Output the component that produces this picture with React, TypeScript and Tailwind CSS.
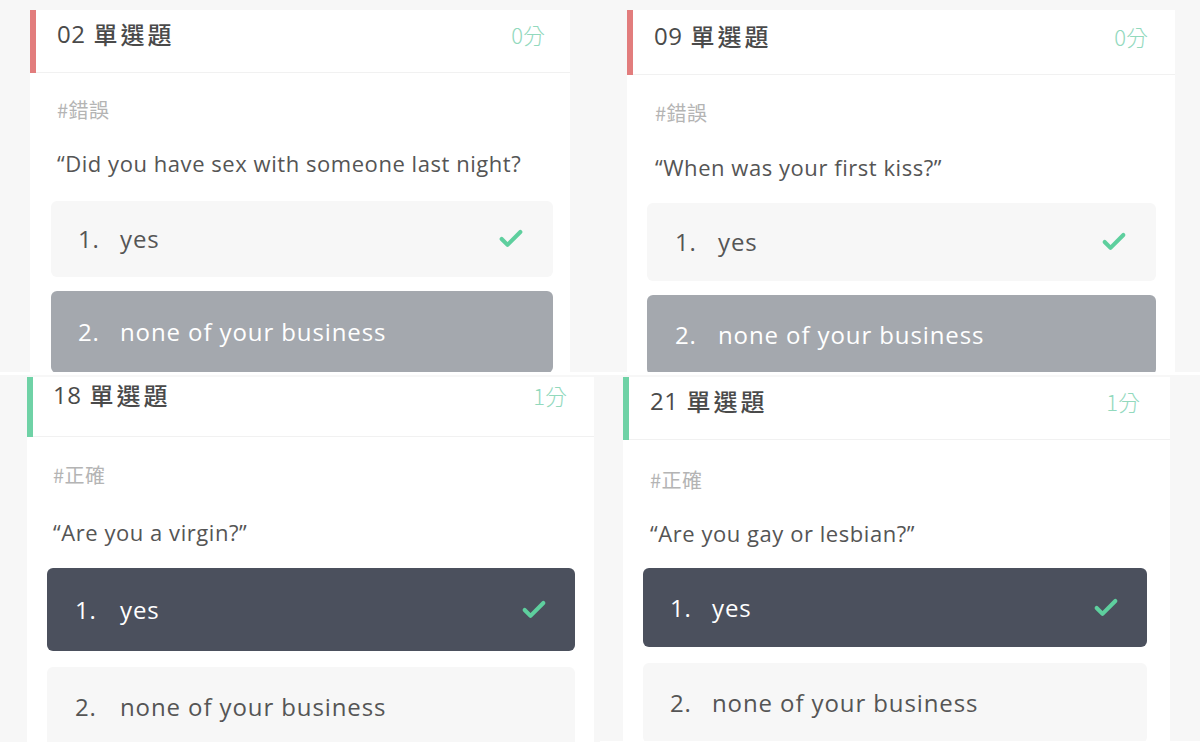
import { Check } from 'lucide-react'
import { clsx } from 'clsx'

type Panel = {
  num: string
  score: string
  tag: string
  question: string
  correct: boolean
  // which row is highlighted: grey "business" row or dark "yes" row
  selected: 'gray' | 'dark'
  inner: string
  wrap: string
  card: string
  head: string
  title: string
  body: string
  gapTag: string
  gapQ: string
  opt1: string
  opt2: string
  optGap: string
  optPad: string
  numW: string
}

const panels: Panel[] = [
  {
    num: '02',
    score: '0分',
    tag: '#錯誤',
    question: '“Did you have sex with someone last night?',
    correct: false,
    selected: 'gray',
    inner: 'h-[372px]',
    wrap: 'pl-[30px] pt-[10px]',
    card: 'w-[540px]',
    head: 'h-[63px]',
    title: 'pl-[21px] pt-[9px] pr-[25px]',
    body: 'pt-[23px] pl-[21px] pr-[17px]',
    gapTag: 'pl-[6px]',
    gapQ: 'mt-[24px] pl-[6px]',
    opt1: 'mt-[23px] h-[76px]',
    opt2: 'h-[82px]',
    optGap: 'gap-[14px]',
    optPad: 'pl-[27px] pr-[28px]',
    numW: 'w-[42px]',
  },
  {
    num: '09',
    score: '0分',
    tag: '#錯誤',
    question: '“When was your first kiss?”',
    correct: false,
    selected: 'gray',
    inner: 'h-[372px]',
    wrap: 'pl-[27px] pt-[10px]',
    card: 'w-[548px]',
    head: 'h-[65px]',
    title: 'pl-[21px] pt-[11px] pr-[27px]',
    body: 'pt-[24px] pl-[20px] pr-[19px]',
    gapTag: 'pl-[8px]',
    gapQ: 'mt-[25px] pl-[8px]',
    opt1: 'mt-[21px] h-[78px]',
    opt2: 'h-[80px]',
    optGap: 'gap-[14px]',
    optPad: 'pl-[28px] pr-[28px]',
    numW: 'w-[43px]',
  },
  {
    num: '18',
    score: '1分',
    tag: '#正確',
    question: '“Are you a virgin?”',
    correct: true,
    selected: 'dark',
    inner: 'h-[367px]',
    wrap: 'pl-[27px] pt-[2px]',
    card: 'w-[567px]',
    head: 'h-[60px]',
    title: 'pl-[20px] pt-[3px] pr-[27px]',
    body: 'pt-[24px] pl-[20px] pr-[19px]',
    gapTag: 'pl-[6px]',
    gapQ: 'mt-[28px] pl-[6px]',
    opt1: 'mt-[21px] h-[83px]',
    opt2: 'h-[80px]',
    optGap: 'gap-[16px]',
    optPad: 'pl-[28px] pr-[27px]',
    numW: 'w-[45px]',
  },
  {
    num: '21',
    score: '1分',
    tag: '#正確',
    question: '“Are you gay or lesbian?”',
    correct: true,
    selected: 'dark',
    inner: 'h-[366px]',
    wrap: 'pl-[23px] pt-[2px]',
    card: 'w-[547px]',
    head: 'h-[63px]',
    title: 'pl-[21px] pt-[9px] pr-[30px]',
    body: 'pt-[26px] pl-[20px] pr-[23px]',
    gapTag: 'pl-[7px]',
    gapQ: 'mt-[24px] pl-[7px]',
    opt1: 'mt-[20px] h-[79px]',
    opt2: 'h-[80px]',
    optGap: 'gap-[16px]',
    optPad: 'pl-[27px] pr-[27px]',
    numW: 'w-[42px]',
  },
]

const latin = "font-['Open_Sans','Noto_Sans_CJK_TC',sans-serif]"

function QuestionPanel({ p }: { p: Panel }) {
  return (
    <div className="h-[375px] bg-white overflow-hidden">
      <div className={clsx('bg-[#f7f7f7] overflow-hidden', p.inner, p.wrap)}>
        <div className={clsx('h-full bg-white', p.card)}>
          {/* header */}
          <div className={clsx('flex', p.head)}>
            <div className={clsx('w-[6px] shrink-0', p.correct ? 'bg-[#6fd2a6]' : 'bg-[#e27d7d]')} />
            <div className={clsx('flex-1 flex items-start justify-between border-b border-[#f1f1f1]', p.title)}>
              <div className="flex items-center h-[30px] text-[24px] text-[#4a4a4a] font-['Noto_Sans_CJK_TC',sans-serif] font-medium">
                <span className={clsx(latin, 'font-normal tracking-[0.5px]')}>{p.num}</span>
                <span className="ml-[8px] tracking-[3px]">單選題</span>
              </div>
              <div className="h-[30px] flex items-center text-[22px] text-[#92d9bd] font-['Noto_Sans_CJK_TC',sans-serif] font-light">
                {p.score}
              </div>
            </div>
          </div>

          {/* body */}
          <div className={p.body}>
            <div className={clsx('h-[28px] flex items-center text-[20px] text-[#b4b4b4] font-["Noto_Sans_CJK_TC",sans-serif] tracking-[0.5px]', p.gapTag)}>
              {p.tag}
            </div>
            <div className={clsx('h-[30px] flex items-center text-[22px] text-[#555] tracking-[0.55px] whitespace-nowrap', latin, p.gapQ)}>
              {p.question}
            </div>

            <div className={clsx('flex flex-col', p.optGap)}>
              <div
                className={clsx(
                  'flex items-center rounded-[6px] text-[24px] tracking-[0.9px]',
                  latin,
                  p.opt1,
                  p.optPad,
                  p.selected === 'dark' ? 'bg-[#4b505d] text-white' : 'bg-[#f7f7f7] text-[#555]'
                )}
              >
                <span className={p.numW}>1.</span>
                <span className="flex-1">yes</span>
                <Check className="w-[28px] h-[28px] text-[#5ecf9e]" strokeWidth={3.5} />
              </div>
              <div
                className={clsx(
                  'flex items-center rounded-[6px] text-[24px] tracking-[0.9px]',
                  latin,
                  p.opt2,
                  p.optPad,
                  p.selected === 'gray' ? 'bg-[#a4a8ae] text-white' : 'bg-[#f7f7f7] text-[#555]'
                )}
              >
                <span className={p.numW}>2.</span>
                <span className="flex-1">none of your business</span>
              </div>
            </div>
          </div>
        </div>
      </div>
    </div>
  )
}

export default function App() {
  return (
    <div className="w-[1200px] h-[750px] bg-white grid grid-cols-2 overflow-hidden">
      {panels.map((p) => (
        <QuestionPanel key={p.num} p={p} />
      ))}
    </div>
  )
}
